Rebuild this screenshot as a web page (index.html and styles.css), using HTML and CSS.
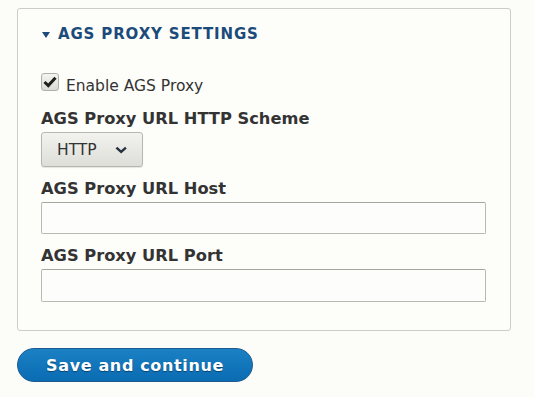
FILE: index.html
```html
<!DOCTYPE html>
<html lang="en">
<head>
    <meta charset="UTF-8">
    <title>AGS Proxy Settings</title>
    <link rel="stylesheet" href="styles.css">
</head>
<body>
    <form class="settings-form">
        <div class="details">
            <div class="summary"><span class="arrow"></span>AGS Proxy Settings</div>

            <div class="details-body">
                <label class="check-row">
                    <span class="checkbox">
                        <svg width="14" height="12" viewBox="0 0 14 12"><path d="M1.5 6 L5.3 9.6 L12.5 1.8" fill="none" stroke="#1e1e1e" stroke-width="3"/></svg>
                    </span>
                    Enable AGS Proxy
                </label>

                <div class="form-item">
                    <div class="field-label">AGS Proxy URL HTTP Scheme</div>
                    <div class="select">
                        HTTP
                        <svg width="13" height="8" viewBox="0 0 13 8"><path d="M1.5 1.5 L6.5 6 L11.5 1.5" fill="none" stroke="#26323f" stroke-width="2.6"/></svg>
                    </div>
                </div>

                <div class="form-item">
                    <div class="field-label">AGS Proxy URL Host</div>
                    <input class="text-input" type="text">
                </div>

                <div class="form-item">
                    <div class="field-label">AGS Proxy URL Port</div>
                    <input class="text-input" type="text">
                </div>
            </div>
        </div>

        <button class="button-primary" type="button">Save and continue</button>
    </form>
</body>
</html>
```

FILE: styles.css
```css
body {
    margin: 0;
    padding: 8px 23px 0 17px;
    background-color: #fcfcf8;
    font-family: "DejaVu Sans", sans-serif;
    font-size: 15.5px;
    color: #333;
}
.details {
    border: 1px solid #ccc;
    border-radius: 3px;
    background-color: #fdfdfa;
    padding: 0 24px 28px 23px;
}
.summary {
    padding-top: 15px;
    height: 20px;
    line-height: 20px;
    color: #1b4b7a;
    font-size: 15px;
    font-weight: bold;
    text-transform: uppercase;
    letter-spacing: 0.85px;
    display: flex;
    align-items: center;
}
.arrow {
    width: 0;
    height: 0;
    border-left: 4px solid transparent;
    border-right: 4px solid transparent;
    border-top: 6px solid #1b4b7a;
    margin: 1px 8px 0 1px;
}
.details-body {
    padding-top: 32px;
}
.check-row {
    display: flex;
    align-items: flex-start;
    gap: 7px;
    height: 20px;
    line-height: 20px;
}
.checkbox {
    width: 16px;
    height: 16px;
    border: 1px solid #b0b0ab;
    border-radius: 3px;
    background: linear-gradient(#f4f4f1, #dadad5);
    display: flex;
    align-items: center;
    justify-content: center;
    margin-top: -3px;
}
.form-item {
    margin-top: 12px;
}
.check-row + .form-item {
    margin-top: 13px;
}
.field-label {
    font-size: 16.25px;
    font-weight: bold;
    line-height: 20px;
    margin-bottom: 3px;
}
.select {
    width: 102px;
    height: 35px;
    box-sizing: border-box;
    border: 1px solid #b7b7b2;
    border-radius: 3px;
    background: linear-gradient(#f2f2ee, #deded9);
    box-shadow: 0 1px 1px rgba(0,0,0,0.1);
    display: flex;
    align-items: center;
    padding: 0 15px;
    gap: 18px;
    color: #333;
}
.text-input {
    display: block;
    width: 100%;
    height: 32px;
    box-sizing: border-box;
    margin: 0;
    border: 1px solid #b8b8b4;
    border-top-color: #a5a5a0;
    border-radius: 2px;
    background-color: #fdfdfb;
}
.form-item:last-child .text-input {
    height: 33px;
}
.button-primary {
    margin-top: 17px;
    width: 236px;
    height: 34px;
    border: 1px solid #1e5c90;
    border-radius: 20px;
    background: linear-gradient(#1b80c4, #0a6cb3);
    color: #fff;
    font-family: "DejaVu Sans", sans-serif;
    font-size: 16px;
    font-weight: bold;
    letter-spacing: 0.04em;
    text-shadow: 0 1px 1px rgba(0,0,0,0.4);
    padding: 0;
}
```
